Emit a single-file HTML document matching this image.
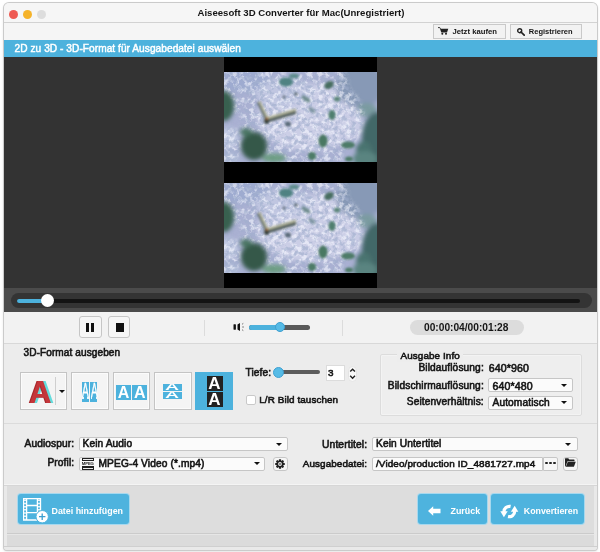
<!DOCTYPE html>
<html lang="de">
<head>
<meta charset="utf-8">
<title>Aiseesoft 3D Converter für Mac</title>
<style>
*{box-sizing:border-box;margin:0;padding:0}
html,body{width:600px;height:552px;overflow:hidden;background:#fff}
body{font-family:"Liberation Sans",sans-serif;font-size:10px;color:#1a1a1a;position:relative}
#win{position:absolute;left:4px;top:2.5px;width:593px;height:547px;border-radius:5px 5px 3px 3px;background:#ececec;overflow:hidden;box-shadow:0 0 0 1px #cbcbcb,0 1px 3px rgba(0,0,0,.22)}
#o{position:absolute;left:-4px;top:-2.5px;width:600px;height:552px;will-change:transform}
#o div,#o svg,#o span{position:absolute}
.band{left:0;width:600px}
.tl{top:9.7px;width:9px;height:9px;border-radius:50%}
.t{white-space:nowrap;line-height:12px;height:12px;color:#151515}
.b{font-weight:bold}
.m{-webkit-text-stroke:.58px #151515;letter-spacing:.1px}
.tbtn{top:24px;height:15px;border:1px solid #c9c9c9;background:#f2f2f2}
.sel{height:14px;background:#fbfbfb;border:1px solid #c6c6c6;border-radius:2px}
.arr{width:0;height:0;border:3px solid transparent;border-top:3.5px solid #111;border-bottom:0}
.fb{top:372px;height:38px;border:1px solid #c4c4c4;background:#f4f4f4;box-shadow:inset 0 0 0 1px #fbfbfb}
.bbtn{top:494px;height:30px;border-radius:3px;background:#4eb3de;box-shadow:0 0 0 1px #a6d8ee}
.w{color:#fff}
.sq{border:1px solid #c6c6c6;background:#f6f6f6;border-radius:2px}
</style>
</head>
<body>
<div id="win"><div id="o">
  <!-- title bar -->
  <div class="band" style="top:2px;height:20px;background:#f6f6f6"></div>
  <div class="band" style="top:22.3px;height:1px;background:#d2d2d2"></div>
  <div class="tl" style="left:8.500px;background:#ee5a52"></div>
  <div class="tl" style="left:22.700px;background:#f5b32a"></div>
  <div class="tl" style="left:36.800px;background:#dddddd"></div>
  <div class="t b" id="ttl" style="left:197.5px;top:7px;font-size:9.6px">Aiseesoft 3D Converter für Mac(Unregistriert)</div>
  <!-- toolbar -->
  <div class="band" style="top:23px;height:18px;background:#f5f5f5"></div>
  <div class="tbtn" style="left:433px;top:23.5px;width:72.500px"></div>
  <div class="tbtn" style="left:509.800px;top:23.5px;width:72.700px"></div>
  <svg style="left:437.5px;top:27px" width="11" height="8" viewBox="0 0 11 8"><path d="M0 .6h1.800l.7 1.200" stroke="#222" stroke-width=".9" fill="none"/><path d="M2 1.800h8.300l-1.300 3.700h-5.700z" fill="#222"/><circle cx="4.300" cy="6.800" r="1" fill="#222"/><circle cx="8" cy="6.800" r="1" fill="#222"/></svg>
  <svg style="left:517px;top:27.5px" width="8" height="8" viewBox="0 0 8 8"><circle cx="2.700" cy="2.700" r="2" fill="none" stroke="#222" stroke-width="1.400"/><path d="M4 4l3.200 3.200" stroke="#222" stroke-width="1.700" stroke-linecap="round"/></svg>
  <div class="t b" id="jk" style="left:452.5px;top:25.8px;font-size:7.700px">Jetzt kaufen</div>
  <div class="t b" id="rg" style="left:528.8px;top:25.8px;font-size:7.500px">Registrieren</div>
  <!-- blue bar -->
  <div class="band" style="top:40.3px;height:16.700px;background:#4db2dd"></div>
  <div class="t w" id="bl" style="left:14.600px;top:42.800px;font-size:10.150px;-webkit-text-stroke:.45px #fff;letter-spacing:.05px">2D zu 3D - 3D-Format für Ausgabedatei auswälen</div>
  <!-- video -->
  <div class="band" style="top:57px;height:231px;background:#333"></div>
  <div style="left:224px;top:57px;width:153px;height:231px;background:#000"></div>

  <svg style="left:0;top:0" width="0" height="0"><defs>
    <filter id="fbl" x="-10%" y="-10%" width="120%" height="120%"><feGaussianBlur stdDeviation="2.2"/></filter>
    <filter id="fbs" x="-10%" y="-10%" width="120%" height="120%"><feGaussianBlur stdDeviation=".8"/></filter>
    <filter id="nz" x="0" y="0" width="100%" height="100%"><feTurbulence type="fractalNoise" baseFrequency=".19" numOctaves="3" seed="7"/><feColorMatrix type="matrix" values="0 0 0 0 .92  0 0 0 0 .93  0 0 0 0 1  5 0 0 0 -2.3"/><feGaussianBlur stdDeviation=".5"/></filter>
    <filter id="nd" x="0" y="0" width="100%" height="100%"><feTurbulence type="fractalNoise" baseFrequency=".22" numOctaves="3" seed="23"/><feColorMatrix type="matrix" values="0 0 0 0 .36  0 0 0 0 .43  0 0 0 0 .62  0 5 0 0 -2.35"/><feGaussianBlur stdDeviation=".5"/></filter>
    <clipPath id="cp"><rect width="153" height="90"/></clipPath>
    <mask id="mk" maskUnits="userSpaceOnUse" x="0" y="0" width="153" height="90"><g filter="url(#fbl)"><ellipse cx="78" cy="46" rx="62" ry="46" fill="#fff"/><ellipse cx="30" cy="18" rx="40" ry="26" fill="#fff"/><ellipse cx="4" cy="72" rx="13" ry="18" fill="#fff"/><ellipse cx="100" cy="8" rx="24" ry="14" fill="#fff"/><ellipse cx="80" cy="84" rx="40" ry="10" fill="#fff"/></g></mask>
    <g id="ph" clip-path="url(#cp)">
      <rect width="153" height="90" fill="#a9b0d2"/>
      <g filter="url(#fbl)">
        <ellipse cx="85" cy="45" rx="52" ry="34" fill="#cbcee6"/>
        <ellipse cx="60" cy="20" rx="30" ry="14" fill="#c0c6e1"/>
        <ellipse cx="18" cy="8" rx="26" ry="12" fill="#9eabd0"/>
        <ellipse cx="136" cy="14" rx="24" ry="22" fill="#8799b6"/>
        <ellipse cx="143" cy="38" rx="10" ry="7" fill="#7a9ba0"/>
        <ellipse cx="5" cy="66" rx="9" ry="11" fill="#c3cbe3"/>
        <ellipse cx="7" cy="86" rx="9" ry="6" fill="#afbbd7"/>
        <ellipse cx="125" cy="55" rx="16" ry="12" fill="#c9cce5"/>
      </g>
      <g mask="url(#mk)">
        <rect width="153" height="90" filter="url(#nz)" opacity=".62"/>
        <rect width="153" height="90" filter="url(#nd)" opacity=".65"/>
      </g>
      <g filter="url(#fbl)">
        <ellipse cx="153" cy="68" rx="15" ry="28" fill="#426868"/><ellipse cx="140" cy="78" rx="8" ry="9" fill="#4a7370"/>
        <ellipse cx="141" cy="87" rx="12" ry="8" fill="#5a8480"/>
        <ellipse cx="0" cy="34" rx="10" ry="15" fill="#37604f"/>
        <ellipse cx="30" cy="74" rx="13" ry="14" fill="#34594a"/>
        <ellipse cx="22" cy="60" rx="6" ry="4" fill="#4a7562"/>
        <ellipse cx="50" cy="86" rx="12" ry="4.500" fill="#6c9c82"/>
      </g>
      <g filter="url(#fbs)">
        <ellipse cx="99" cy="69" rx="4.500" ry="6.500" fill="#487862"/>
        <ellipse cx="108" cy="43" rx="3.500" ry="5" fill="#4f7f6e"/>
        <ellipse cx="105" cy="13" rx="5" ry="3.500" fill="#476d60" transform="rotate(-30 105 13)"/>
        <ellipse cx="62" cy="10" rx="7" ry="4.500" fill="#4f8282"/>
        <ellipse cx="70" cy="4" rx="5" ry="2.500" fill="#5d8c8c"/>
        <ellipse cx="124" cy="73" rx="7" ry="3.500" fill="#4d7b68"/>
        <ellipse cx="88" cy="84" rx="4" ry="4" fill="#4d7b68"/>
        <ellipse cx="113" cy="27" rx="3" ry="2.500" fill="#5a8577"/>
        <ellipse cx="82" cy="27" rx="5" ry="2" fill="#6d8a8c" transform="rotate(35 82 27)"/>
        <ellipse cx="88" cy="38" rx="4" ry="2" fill="#7c93a0" transform="rotate(40 88 38)"/>
        <path d="M34.500 30L42.500 47" stroke="#5a6868" stroke-width="3.400" fill="none"/>
        <path d="M35.500 29.500L43.500 46" stroke="#b4b69c" stroke-width="2" fill="none"/>
        <path d="M44 48.500L72 40" stroke="#55625f" stroke-width="3.400" fill="none"/>
        <path d="M43.500 46L72 37.500" stroke="#b8ba9e" stroke-width="2.200" fill="none"/>
        <ellipse cx="42.500" cy="49" rx="2.500" ry="3" fill="#39423d"/>
        <circle cx="43" cy="46.500" r="1.200" fill="#a8703a"/>
        <ellipse cx="64" cy="52" rx="3" ry="2.500" fill="#5a6a78"/>
        <ellipse cx="125" cy="87" rx="4" ry="2.500" fill="#4d7b68"/>
        <ellipse cx="72" cy="22" rx="2" ry="1.500" fill="#55636e"/>
        <ellipse cx="60" cy="25" rx="1.500" ry="1.500" fill="#55636e"/>
      </g>
    </g>
  </defs></svg>
  <svg style="left:224px;top:72px" width="153" height="90" viewBox="0 0 153 90"><use href="#ph"/></svg>
  <svg style="left:224px;top:183px" width="153" height="90" viewBox="0 0 153 90"><use href="#ph"/></svg>
  <!-- seek -->
  <div class="band" style="top:288px;height:24px;background:#4b4b4b"></div>
  <div style="left:11px;top:292.5px;width:581px;height:15px;border-radius:8px;background:#343434"></div>
  <div style="left:17px;top:299px;width:563px;height:3.5px;border-radius:2px;background:#141414"></div>
  <div style="left:17px;top:299px;width:30px;height:3.5px;border-radius:2px;background:#4db2dd"></div>
  <div style="left:41px;top:293.5px;width:13px;height:13px;border-radius:50%;background:#fff"></div>
  <!-- controls -->
  <div class="band" style="top:312px;height:31px;background:#f2f2f2"></div>
  <div class="band" style="top:343px;height:1px;background:#d8d8d8"></div>
  <div class="sq" style="left:79px;top:316px;width:22.500px;height:22px;border-radius:3px"></div>
  <div class="sq" style="left:107.5px;top:316px;width:22.500px;height:22px;border-radius:3px"></div>
  <div style="left:85.5px;top:323px;width:3px;height:8.500px;background:#111"></div>
  <div style="left:91px;top:323px;width:3px;height:8.500px;background:#111"></div>
  <div style="left:115.5px;top:323px;width:8.500px;height:8.500px;background:#111"></div>
  <div style="left:204px;top:320px;width:1px;height:16px;background:#dcdcdc"></div>
  <div style="left:341.5px;top:320px;width:1px;height:16px;background:#dcdcdc"></div>
  <svg style="left:233px;top:322px" width="13" height="10" viewBox="0 0 13 10"><rect x=".5" y="2.300" width="2.400" height="5.400" rx=".4" fill="#111"/><path d="M4.500 2.500L7 .9V9.100L4.500 7.500Z" fill="#111"/><path d="M9 2.300l1.300-.9M9.200 5h1.700M9 7.700l1.300.9" stroke="#555" stroke-width=".8" fill="none"/></svg>
  <div style="left:249px;top:324.7px;width:60.500px;height:5px;border-radius:2.500px;background:#5a5a5a"></div>
  <div style="left:249px;top:324.7px;width:31px;height:5px;border-radius:2.500px;background:#4db2dd"></div>
  <div style="left:274.5px;top:321.8px;width:10.500px;height:10.500px;border-radius:50%;background:#56bbe6;border:1px solid #3f9fd0"></div>
  <div style="left:410px;top:320px;width:114px;height:15px;border-radius:8px;background:#dcdcdc"></div>
  <div class="t b" id="tm" style="left:424px;top:322.2px;font-size:10.2px">00:00:04/00:01:28</div>
  <!-- 3D format -->
  <div class="t m" style="left:23.500px;top:346.5px;font-size:10.050px">3D-Format ausgeben</div>
  <div class="fb" style="left:20px;width:46.500px"></div>
  <div class="fb" style="left:71px;width:37.500px"></div>
  <div class="fb" style="left:112.5px;width:37.500px"></div>
  <div class="fb" style="left:154px;width:37.500px"></div>
  <div class="fb" style="left:195px;width:38px;background:#4db2dd;border-color:#4db2dd;box-shadow:none"></div>
  <div class="t b" style="left:31.700px;top:376.500px;font-size:31px;line-height:31px;height:31px;color:#63dcdc">A</div>
  <div class="t b" style="left:28px;top:377.400px;font-size:31px;line-height:31px;height:31px;color:#a8282c">A</div>
  <div class="t b" style="left:29.300px;top:376.700px;font-size:31px;line-height:31px;height:31px;color:#c4363a">A</div>
  <div style="left:55px;top:377px;width:1px;height:28px;background:#cfcfcf"></div>
  <div class="arr" style="left:58.5px;top:390px"></div>
  <!-- b2 -->
  <div style="left:81.7px;top:381.5px;width:7.600px;height:20px;background:#4db2dd"></div>
  <div style="left:90.1px;top:381.5px;width:7.400px;height:20px;background:#4db2dd"></div>
  <div style="left:82.300px;top:396.800px;width:1.400px;height:1.900px;background:#eaf7fc"></div><div style="left:87.300px;top:396.800px;width:1.400px;height:1.900px;background:#eaf7fc"></div><div style="left:90.800px;top:396.800px;width:1.400px;height:1.900px;background:#eaf7fc"></div><div style="left:95.800px;top:396.800px;width:1.400px;height:1.900px;background:#eaf7fc"></div>
  <div class="t w" style="left:82.100px;top:379.700px;font-size:21px;line-height:20px;height:20px;transform:scaleX(.48);transform-origin:0 0;-webkit-text-stroke:.4px #fff">A</div>
  <div class="t w" style="left:90.600px;top:379.700px;font-size:21px;line-height:20px;height:20px;transform:scaleX(.48);transform-origin:0 0;-webkit-text-stroke:.4px #fff">A</div>
  <!-- b3 -->
  <div style="left:115.6px;top:384.5px;width:15.200px;height:15.200px;background:#4db2dd"></div>
  <div style="left:131.8px;top:384.5px;width:15.200px;height:15.200px;background:#4db2dd"></div>
  <div class="t b w" style="left:117.7px;top:385px;font-size:16px;line-height:16px;height:16px">A</div>
  <div class="t b w" style="left:133.9px;top:385px;font-size:16px;line-height:16px;height:16px">A</div>
  <!-- b4 -->
  <div style="left:162.6px;top:384px;width:19.200px;height:7.200px;background:#4db2dd;overflow:hidden"><div class="t b w" style="left:2.600px;top:-.1px;font-size:10px;line-height:8px;height:8px;transform:scale(1.950,.82);transform-origin:0 0">A</div></div>
  <div style="left:162.6px;top:392px;width:19.200px;height:7.400px;background:#4db2dd;overflow:hidden"><div class="t b w" style="left:2.600px;top:-.1px;font-size:10px;line-height:8px;height:8px;transform:scale(1.950,.82);transform-origin:0 0">A</div></div>
  <!-- b5 -->
  <div style="left:206.5px;top:375.8px;width:16px;height:15px;background:#222"></div>
  <div style="left:206.5px;top:391.8px;width:16px;height:15.500px;background:#222"></div>
  <div class="t b w" style="left:208.3px;top:375.5px;font-size:17px;line-height:16px;height:16px">A</div>
  <div class="t b w" style="left:208.3px;top:391.8px;font-size:17px;line-height:16px;height:16px">A</div>
  <!-- tiefe -->
  <div class="t m" style="left:245.5px;top:367px;font-size:10.2px">Tiefe:</div>
  <div style="left:279px;top:370px;width:41px;height:4px;border-radius:2px;background:#5c5c5c"></div>
  <div style="left:273.3px;top:366.5px;width:11px;height:11px;border-radius:50%;background:#56bbe6;border:1px solid #3f9fd0"></div>
  <div style="left:326px;top:365px;width:19px;height:15.500px;background:#fff;border:1px solid #dcdcdc"></div>
  <div class="t m" style="left:328px;top:366.600px;font-size:9.900px">3</div>
  <div style="left:347.5px;top:366.3px;width:9.200px;height:15.400px;border-radius:4.600px;border:1px solid #e4e4e4;background:#f8f8f8"></div>
  <svg style="left:347.5px;top:366.3px" width="9.200" height="15.400" viewBox="0 0 9.200 15.400"><path d="M2.200 5.600l2.400-2.400l2.400 2.400M2.200 9.800l2.400 2.400l2.400-2.400" stroke="#222" stroke-width="1.400" fill="none"/></svg>
  <div style="left:245.5px;top:394.5px;width:10px;height:10px;border:1px solid #c9c9c9;border-radius:2px;background:#fff"></div>
  <div class="t m" style="left:259.3px;top:394px;font-size:9.850px">L/R Bild tauschen</div>
  <!-- ausgabe info -->
  <div style="left:380px;top:354px;width:202px;height:61.500px;border:1px solid #dcdcdc;border-radius:2px;box-shadow:inset 0 0 0 1px #f3f3f3;background:#eeeeee"></div>
  <div class="t m" style="left:397px;top:349.8px;font-size:9.900px;background:#ededed;padding:0 3.500px">Ausgabe Info</div>
  <div class="t m" style="right:116.2px;top:362.2px;font-size:10.2px">Bildauflösung:</div>
  <div class="t m" style="left:488.8px;top:362.2px;font-size:10.6px">640*960</div>
  <div class="t m" style="right:116.2px;top:379.5px;font-size:10.2px">Bildschirmauflösung:</div>
  <div class="sel" style="left:488px;top:378px;width:84.500px"></div>
  <div class="t m" style="left:492.5px;top:379.5px;font-size:10.6px">640*480</div>
  <div class="arr" style="left:561.2px;top:384px"></div>
  <div class="t m" style="right:116.2px;top:396.1px;font-size:10.2px">Seitenverhältnis:</div>
  <div class="sel" style="left:488px;top:395.5px;width:84.500px"></div>
  <div class="t m" style="left:492.5px;top:396.6px;font-size:10.2px">Automatisch</div>
  <div class="arr" style="left:561.2px;top:401px"></div>
  <!-- io -->
  <div class="band" style="top:423px;height:1px;background:#dbdbdb"></div>
  <div class="t m" style="right:525.8px;top:438.2px;font-size:10.2px">Audiospur:</div>
  <div class="sel" style="left:79px;top:437px;width:208.500px"></div>
  <div class="t m" style="left:82.5px;top:438.2px;font-size:10.2px">Kein Audio</div>
  <div class="arr" style="left:275.5px;top:443px"></div>
  <div class="t m" style="right:525.8px;top:457.4px;font-size:10.2px">Profil:</div>
  <div class="sel" style="left:79px;top:456.5px;width:186px;height:14.500px"></div>
  <div style="left:81.5px;top:457.5px;width:12px;height:3.800px;background:#222"></div>
  <div style="left:82.5px;top:459px;width:10px;height:.8px;background:#eee"></div>
  <div style="left:81.5px;top:466px;width:12px;height:3.800px;background:#222"></div>
  <div style="left:82.5px;top:467.500px;width:10px;height:.8px;background:#eee"></div>
  <div class="t b" style="left:81.8px;top:461.2px;font-size:4.200px;line-height:5px;height:5px;color:#222;letter-spacing:-.1px">MPEG</div>
  <div class="t m" style="left:98.5px;top:457.5px;font-size:10.2px">MPEG-4 Video (*.mp4)</div>
  <div class="arr" style="left:253.5px;top:462px"></div>
  <div class="sq" style="left:273px;top:456.8px;width:14.500px;height:14.400px;border-radius:3px"></div>
  <svg style="left:275px;top:459px" width="10" height="10" viewBox="-5 -5 10 10"><g fill="#222"><circle r="3.600"/><g id="gt"><rect x="-1.100" y="-4.800" width="2.200" height="9.600" rx=".5"/></g><use href="#gt" transform="rotate(45)"/><use href="#gt" transform="rotate(90)"/><use href="#gt" transform="rotate(135)"/></g><circle r="1.900" fill="#f4f4f4"/><circle r=".9" fill="#555"/></svg>
  <div class="t m" style="right:232.8px;top:438.6px;font-size:10.3px">Untertitel:</div>
  <div class="sel" style="left:372px;top:437px;width:205.500px"></div>
  <div class="t m" style="left:376px;top:438.4px;font-size:10.2px">Kein Untertitel</div>
  <div class="arr" style="left:565px;top:443px"></div>
  <div class="t m" style="right:232.8px;top:457.5px;font-size:9.900px">Ausgabedatei:</div>
  <div class="sel" style="left:372px;top:456.5px;width:171px;height:14.500px;border-radius:2px 0 0 2px"></div>
  <div class="t m" style="left:376px;top:457.5px;font-size:9.950px">/Video/production ID_4881727.mp4</div>
  <div class="sq" style="left:542.5px;top:456.5px;width:15px;height:14.500px;border-radius:0 2px 2px 0"></div>
  <div style="left:545.1px;top:461.8px;width:2.500px;height:2.500px;border-radius:50%;background:#222"></div>
  <div style="left:549.1px;top:461.8px;width:2.500px;height:2.500px;border-radius:50%;background:#222"></div>
  <div style="left:553.1px;top:461.8px;width:2.500px;height:2.500px;border-radius:50%;background:#222"></div>
  <div class="sq" style="left:563px;top:456.5px;width:14.500px;height:14.500px;border-radius:3px"></div>
  <svg style="left:565.200px;top:458.200px" width="11" height="9" viewBox="0 0 11 9"><path d="M0 8.500V.8q0-.5.500-.5h2.800l1 1.200h4.700q.5 0 .5.500v1.200h-7l-2 5.300z" fill="#222"/><path d="M.8 8.700l2-5h8l-1.900 5z" fill="#222"/></svg>
  <!-- bottom bar -->
  <div class="band" style="top:483.5px;height:1.500px;background:#f4f4f4"></div>
  <div class="band" style="top:485px;height:48px;background:#dddddd"></div>
  <div class="band" style="top:485px;height:1px;background:#d6d6d6"></div>
  <div class="band" style="top:532.5px;height:1px;background:#cbcbcb"></div>
  <div class="band" style="top:534px;height:16px;background:#dbdbdb"></div>
  <div class="band" style="top:534px;height:1px;background:#e6e6e6"></div>
  <div style="left:4px;top:485.500px;width:3.200px;height:65px;background:#e9e9e9"></div>
  <div style="left:593.800px;top:485.500px;width:4px;height:65px;background:#e9e9e9"></div>
  <div class="band" style="top:546.500px;height:4px;background:#e9e9e9"></div>
  <div class="band" style="top:546px;height:.7px;background:#cfcfcf"></div>
  <div class="bbtn" style="left:18px;width:111px"></div>
  <div class="bbtn" style="left:417.5px;width:69px"></div>
  <div class="bbtn" style="left:491px;width:93px"></div>
  <!-- film icon -->
  <svg style="left:23px;top:497.5px" width="26" height="25" viewBox="0 0 26 25"><path d="M.5.500h17v21.500h-17z" fill="none" stroke="#fff" stroke-width="1.300"/><path d="M3.600.500v21.500M14.400.500v21.500M3.600 7.500h10.800M3.600 14.700h10.800" stroke="#fff" stroke-width="1.300" fill="none"/><path d="M2 1.500v20M16 1.500v12" stroke="#fff" stroke-width="1.700" stroke-dasharray="1.500 1.700" fill="none"/><circle cx="19.200" cy="18.700" r="6.200" fill="#fff" stroke="#4eb3de" stroke-width="1"/><path d="M19.200 15.500v6.400M16 18.700h6.400" stroke="#3a9fd0" stroke-width="1.300"/></svg>
  <!-- back arrow -->
  <svg style="left:428px;top:506px" width="13" height="10" viewBox="0 0 13 10"><path d="M0 5L5.200.2V2.800H12.500V7.200H5.200V9.800Z" fill="#fff"/></svg>
  <!-- convert icon -->
  <svg style="left:500px;top:503.5px" width="19" height="15" viewBox="0 0 19 15"><path d="M10.600 2.400A5.600 5.600 0 0 0 3.900 8" stroke="#fff" stroke-width="3.200" fill="none"/><path d="M.3 7.200h7.400L3.900 13.200z" fill="#fff"/><path d="M8 12.600A5.600 5.600 0 0 0 14.700 7" stroke="#fff" stroke-width="3.200" fill="none"/><path d="M10.900 7.800h7.400L14.700 1.800z" fill="#fff"/></svg>
  <div class="t b w" style="left:51.5px;top:504.8px;font-size:8.900px">Datei hinzufügen</div>
  <div class="t b w" style="left:450.5px;top:504.8px;font-size:8.900px">Zurück</div>
  <div class="t b w" style="left:523.8px;top:504.8px;font-size:8.800px">Konvertieren</div>
</div></div>
</body>
</html>
